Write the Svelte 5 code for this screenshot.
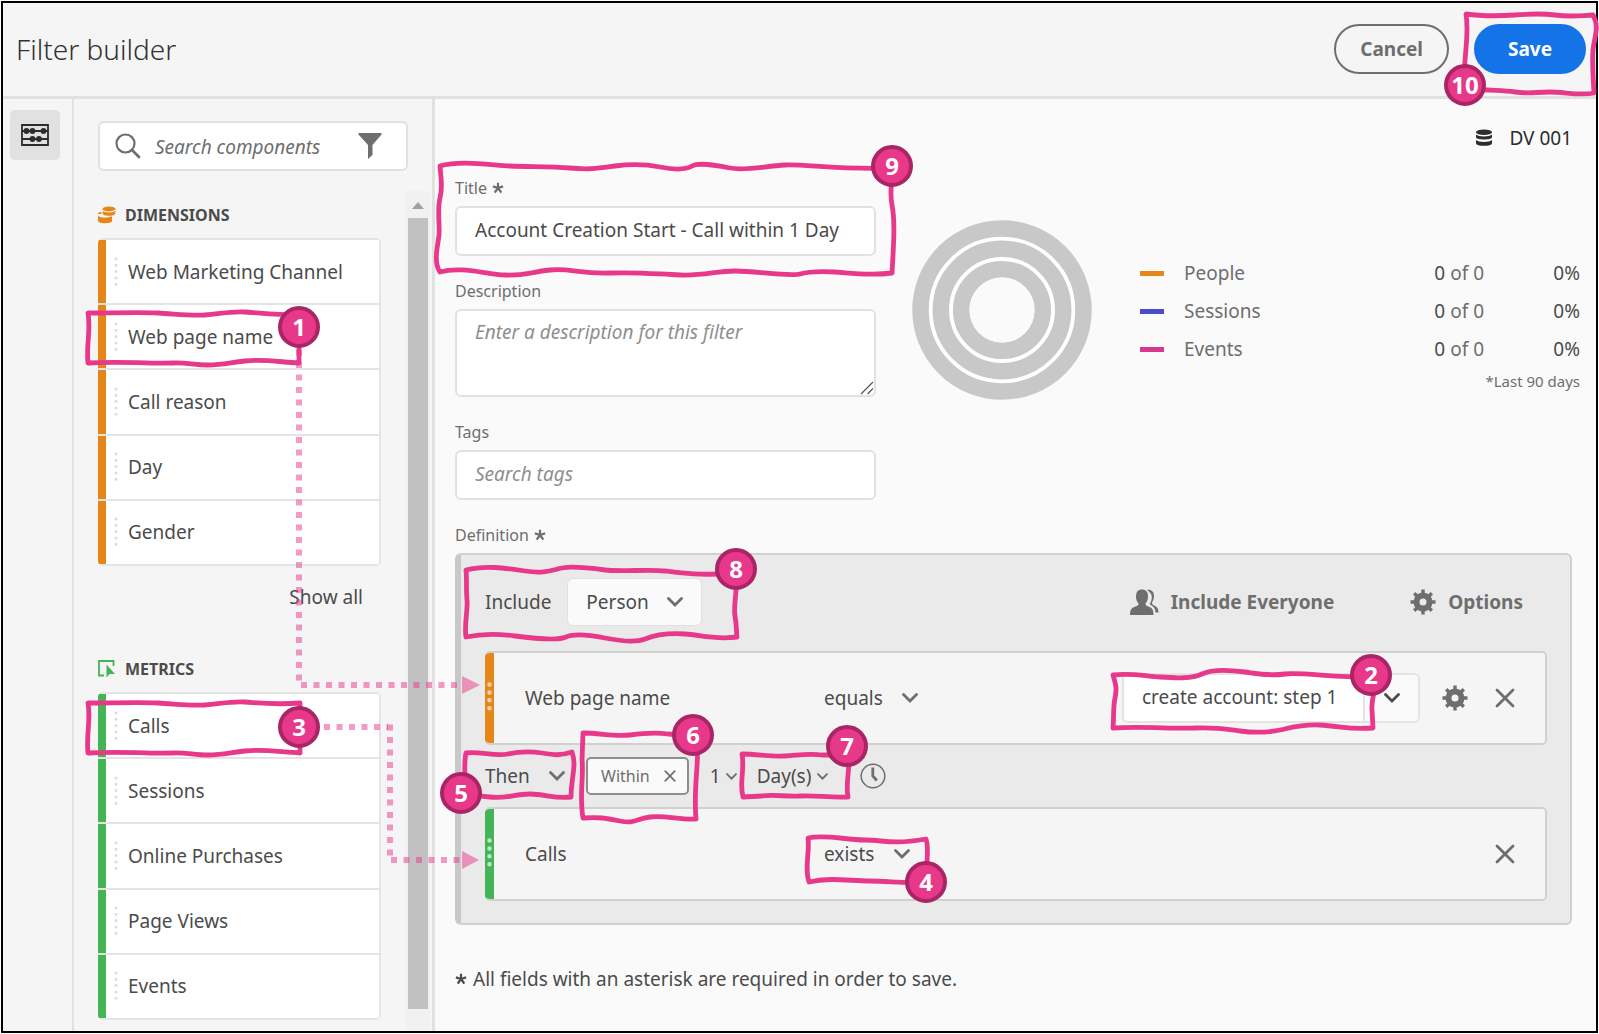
<script>
  const groups = [
    {
      name: 'Dimensions',
      kind: 'dimension',
      items: ['Web Marketing Channel', 'Web page name', 'Call reason', 'Day', 'Gender'],
      more: true
    },
    {
      name: 'Metrics',
      kind: 'metric',
      items: ['Calls', 'Sessions', 'Online Purchases', 'Page Views', 'Events'],
      more: false
    }
  ];

  const stats = [
    { name: 'People', kind: 'people' },
    { name: 'Sessions', kind: 'sessions' },
    { name: 'Events', kind: 'events' }
  ];

  const badges = [
    { n: 1, x: 299, y: 327 },
    { n: 2, x: 1371, y: 675 },
    { n: 3, x: 299, y: 727 },
    { n: 4, x: 926, y: 882 },
    { n: 5, x: 461, y: 793 },
    { n: 6, x: 693, y: 735 },
    { n: 7, x: 847, y: 746 },
    { n: 8, x: 736, y: 569 },
    { n: 9, x: 892, y: 166 },
    { n: 10, x: 1465, y: 85 }
  ];

  const outlines = [
    'M88 313 C110 313 140 312 158 313 S190 316 205 315 S230 311 245 312 S275 315 299 315 V345 L299 363 C280 362 262 359 245 361 S222 365 208 365 S185 362 172 363 S120 361 88 363 C86 345 91 330 88 313Z',
    'M88 703 C110 703 140 702 158 703 S190 706 205 705 S230 701 245 702 S275 705 300 703 V735 L300 753 C280 752 262 749 245 751 S222 755 208 755 S185 752 172 753 S120 751 88 753 C86 735 91 720 88 703Z',
    'M440 166 C460 160 490 165 510 166 S550 166 570 168 S600 168 615 166 S645 164 660 167 S685 170 692 166 S715 165 730 168 S765 166 785 165 S840 170 892 168 C893 180 889 190 892 205 S894 240 892 273 C870 276 850 273 835 272 S810 271 800 274 S755 271 735 271 S705 276 680 275 S640 272 610 273 S570 268 550 270 S525 276 505 275 S460 266 440 272 C433 262 438 245 439 235 S437 210 440 198 S441 180 440 166Z',
    'M466 570 C485 565 505 568 525 571 S552 570 562 568 S590 568 605 570 S650 569 665 571 S700 576 736 573 C738 590 733 605 735 616 S736 630 737 637 C715 640 700 635 685 634 S655 635 645 639 S615 640 605 638 S575 633 566 637 S530 638 515 636 S480 634 466 637 C464 625 468 610 467 600 S467 580 466 570Z',
    'M1113 675 C1130 673 1145 676 1160 677 S1192 679 1202 674 S1230 670 1245 672 S1270 676 1285 674 S1340 678 1375 677 C1376 690 1371 700 1372 710 L1373 728 C1350 730 1340 726 1320 725 S1290 728 1280 730 S1255 733 1240 731 S1215 727 1195 728 S1140 726 1113 728 C1114 715 1113 708 1115 698 S1116 685 1113 675Z',
    'M1466 14 C1480 16 1500 16 1515 15 S1540 13 1555 15 S1575 16 1593 15 C1600 27 1594 38 1593 50 S1593 75 1594 93 C1580 96 1565 92 1550 92 S1530 94 1515 92 S1490 91 1465 88 C1462 60 1470 40 1466 14Z',
    'M466 753 C480 751 495 757 508 754 S530 751 542 753 S560 756 572 752 C577 765 571 778 571 797 C555 799 545 794 530 794 S505 799 490 797 S470 796 463 795 C467 780 463 765 466 753Z',
    'M583 733 C600 733 615 737 630 735 S655 732 668 734 L697 736 C700 760 693 785 696 819 C680 820 665 815 650 817 S635 824 620 821 S600 817 583 818 C579 795 584 775 582 760 Z',
    'M742 754 C758 754 770 757 785 756 S810 753 822 755 L848 755 C851 770 845 780 848 797 C830 798 815 795 800 796 S775 794 762 796 L743 797 C739 783 745 770 742 754Z',
    'M808 838 C825 834 845 840 865 840 S890 845 926 839 C930 850 925 865 927 882 C905 884 890 881 870 881 S830 877 809 882 C804 868 810 852 808 838Z'
  ];
</script>

{#snippet chevron(small)}
  <svg class="chevron" class:small viewBox="0 0 16 10" aria-hidden="true">
    <path d="M1.5 1.5 8 8 14.5 1.5" fill="none" stroke="currentColor" stroke-width="2.8" stroke-linecap="round" />
  </svg>
{/snippet}

{#snippet gear()}
  <svg class="i26" viewBox="0 0 26 26" aria-hidden="true">
    <circle cx="13" cy="13" r="6.5" fill="none" stroke="currentColor" stroke-width="6" />
    <g stroke="currentColor" stroke-width="3.4">
      <path d="M13 .5V5M13 21v4.500M.5 13H5M21 13h4.500M4.200 4.200l3 3M18.800 18.800l3 3M4.200 21.800l3-3M18.800 7.200l3-3" />
    </g>
  </svg>
{/snippet}

{#snippet cross(small)}
  <svg class="cross" class:small viewBox="0 0 20 20" aria-hidden="true">
    <path d="M2 2 18 18M18 2 2 18" stroke="currentColor" stroke-width="2.8" stroke-linecap="round" />
  </svg>
{/snippet}

{#snippet asterisk()}
  <svg class="asterisk" viewBox="0 0 12 12" aria-hidden="true">
    <path d="M6 6V.8M6 6 .9 4.400M6 6l5.100-1.600M6 6l-3.300 4.700M6 6l3.300 4.700" stroke="currentColor" stroke-width="2.2" />
  </svg>
{/snippet}

{#snippet dropdown(label, value, small)}
  <span class="dropdown" class:compact={small}>
    <select aria-label={label}><option>{value}</option></select>
    {@render chevron(small)}
  </span>
{/snippet}

<div class="page">
  <header>
    <h1>Filter builder</h1>
    <button class="pill">Cancel</button>
    <button class="pill primary">Save</button>
  </header>

  <div class="body">
    <nav>
      <button class="rail-button" aria-label="Components">
        <svg viewBox="0 0 28 22" aria-hidden="true">
          <path d="M1 1h26v20H1zM1 7h26M1 15h26" fill="none" stroke="#2c2c2c" stroke-width="1.8" />
          <g fill="#2c2c2c"><circle cx="5.500" cy="7" r="2.900" /><circle cx="11.500" cy="7" r="2.900" /><circle cx="22.500" cy="7" r="2.900" /><circle cx="11.500" cy="15" r="2.900" /><circle cx="18" cy="15" r="2.900" /></g>
        </svg>
      </button>
    </nav>

    <aside>
      <div class="search">
        <svg class="i26" viewBox="0 0 26 26" aria-hidden="true">
          <circle cx="10.500" cy="10.500" r="9" fill="none" stroke="#6e6e6e" stroke-width="2.200" />
          <path d="m17 17 7 7" stroke="#6e6e6e" stroke-width="2.800" stroke-linecap="round" />
        </svg>
        <input type="search" placeholder="Search components" aria-label="Search components" />
        <button class="plain" aria-label="Filter components">
          <svg class="i26" viewBox="0 0 26 26" aria-hidden="true"><path d="M1.500 0h23v1.500L15.500 12v10l-4.500 4V12L1.500 1.500z" fill="#6e6e6e" /></svg>
        </button>
      </div>
      <div class="scroll-area">
        <div class="groups">
          {#each groups as group}
            <section class={group.kind}>
              <h2>
                {#if group.kind === 'dimension'}
                  <svg viewBox="0 0 18 18" aria-hidden="true">
                    <path d="M0 9c0 3.500 14 3.500 14 0v6c0 3-14 3-14 0z" fill="#e68619" />
                    <path d="M4.500 3v4.500c0 3.500 13 3.500 13 0V3z" fill="#e68619" stroke="#f5f5f5" stroke-width=".6" />
                    <ellipse cx="11" cy="3.200" rx="6.500" ry="2.600" fill="#e68619" />
                    <path d="M5 4.200c2 2.300 10 2.300 12 0M.5 8.500c1 .6 2 1 3.500 1.200" fill="none" stroke="#f5f5f5" stroke-width="1.100" />
                    <path d="M0 8c0-1.500 1.500-2 3.500-2v2z" fill="#e68619" />
                  </svg>
                {:else}
                  <svg viewBox="0 0 18 18" aria-hidden="true">
                    <path d="M6 15.500H1V1h14.500v5" fill="none" stroke="#44b556" stroke-width="1.800" />
                    <path d="M8.500 4.500v13l3-3.500h5.500z" fill="#44b556" />
                  </svg>
                {/if}
                {group.name}
              </h2>
              <ul>
                {#each group.items as item}
                  <li>
                    <svg class="grip" viewBox="0 0 4 30" aria-hidden="true"><path d="M2 2v26" /></svg>
                    {item}
                  </li>
                {/each}
              </ul>
              {#if group.more}<button class="plain more">Show all</button>{/if}
            </section>
          {/each}
        </div>
        <div class="scrollbar">
          <svg viewBox="0 0 12 7" aria-hidden="true"><path d="M0 7 6 0l6 7z" fill="#a0a0a0" /></svg>
          <div class="thumb"></div>
        </div>
      </div>
    </aside>

    <main>
      <div class="data-view">
        <svg viewBox="0 0 18 18" aria-hidden="true">
          <g fill="#2c2c2c"><ellipse cx="9" cy="3.200" rx="8" ry="2.800" /><path d="M1 5.500c2 2.500 14 2.500 16 0v2.800c0 3-16 3-16 0zM1 11c2 2.500 14 2.500 16 0v3.200c0 3.500-16 3.500-16 0z" /></g>
        </svg>
        DV 001
      </div>

      <div class="overview">
        <div class="form">
          <label for="title">Title {@render asterisk()}</label>
          <input id="title" type="text" value="Account Creation Start - Call within 1 Day" />
          <label for="description">Description</label>
          <div class="area">
            <textarea id="description" placeholder="Enter a description for this filter"></textarea>
            <svg viewBox="0 0 14 14" aria-hidden="true"><path d="M1 13 13 1M7.500 13 13 7.500" stroke="#555" stroke-width="1.200" /></svg>
          </div>
          <label for="tags">Tags</label>
          <input id="tags" type="text" placeholder="Search tags" />
        </div>

        <svg class="rings" viewBox="0 0 180 180" aria-hidden="true">
          <circle cx="90" cy="90" r="75" fill="#fff" />
          <g fill="none" stroke="#c8c8c8">
            <circle cx="90" cy="90" r="81.500" stroke-width="16.500" />
            <circle cx="90" cy="90" r="61.200" stroke-width="16.500" />
            <circle cx="90" cy="90" r="40.800" stroke-width="16.500" />
          </g>
          <circle cx="90" cy="90" r="32.500" fill="#fafafa" />
        </svg>

        <div class="stats">
          <table>
            <tbody>
              {#each stats as s}
                <tr>
                  <td class="key"><span class={s.kind}></span></td>
                  <th scope="row">{s.name}</th>
                  <td><b>0</b> of 0</td>
                  <td class="share">0%</td>
                </tr>
              {/each}
            </tbody>
          </table>
          <p>*Last 90 days</p>
        </div>
      </div>

      <h3>Definition {@render asterisk()}</h3>
      <section class="definition">
        <div class="scope">
          <span>Include</span>
          <span class="boxed">{@render dropdown('Include scope', 'Person', false)}</span>
          <button class="plain strong everyone">
            <svg viewBox="0 0 30 26" aria-hidden="true">
              <path d="M18 1c4-1 7 1.500 7 6 0 3-1 5-2 6.500 0 2 1 2.500 3 3.500 2.500 1.200 3.500 3 3.500 6.500h-3c0-4-2-6-5-7.500-.7-.5-.7-1.500 0-2.500 2-3.500 2.500-9-3.500-12.500z" fill="#6e6e6e" />
              <path d="M13 .5c4 0 6 2.500 6 7 0 3-1 5.500-2.500 7 0 2 .8 2.300 3.300 3.200 3.600 1.300 4.700 3 4.700 8.300H1c0-5.300 1.400-7 5-8.300 2.500-.9 3.500-1.200 3.500-3.200C8 13 7 10.500 7 7.500c0-4.500 2-7 6-7z" fill="#6e6e6e" />
            </svg>
            Include Everyone
          </button>
          <button class="plain strong">{@render gear()} Options</button>
        </div>

        <article class="rule dimension">
          <svg class="handle" viewBox="0 0 8 30" aria-hidden="true"><path d="M4 3v25" /></svg>
          <span class="name">Web page name</span>
          {@render dropdown('Operator', 'equals', false)}
          <span class="value">
            <input type="text" value="create account: step 1" aria-label="Value" />
            <button aria-label="Show values">{@render chevron(false)}</button>
          </span>
          <button class="plain" aria-label="Rule options">{@render gear()}</button>
          <button class="plain remove" aria-label="Remove rule">{@render cross(false)}</button>
        </article>

        <div class="sequence">
          {@render dropdown('Sequence', 'Then', false)}
          <span class="tag">Within <button class="plain" aria-label="Remove Within">{@render cross(true)}</button></span>
          {@render dropdown('Count', '1', true)}
          <span class="unit">{@render dropdown('Unit', 'Day(s)', true)}</span>
          <button class="plain clock" aria-label="Time restriction">
            <svg class="i26" viewBox="0 0 26 26" aria-hidden="true">
              <circle cx="13" cy="13" r="11.800" fill="none" stroke="#6e6e6e" stroke-width="1.500" />
              <path d="M12.800 4.500V13l4 4.500" fill="none" stroke="#6e6e6e" stroke-width="2.800" />
            </svg>
          </button>
        </div>

        <article class="rule metric">
          <svg class="handle" viewBox="0 0 8 30" aria-hidden="true"><path d="M4 3v25" /></svg>
          <span class="name">Calls</span>
          {@render dropdown('Operator', 'exists', false)}
          <button class="plain remove last" aria-label="Remove rule">{@render cross(false)}</button>
        </article>
      </section>

      <p class="note">{@render asterisk()} All fields with an asterisk are required in order to save.</p>
    </main>
  </div>

  <svg class="callouts" viewBox="0 0 1599 1034" role="img" aria-label="Numbered steps">
    <g fill="none" stroke="#e8388a" stroke-opacity=".5" stroke-width="6" stroke-dasharray="6 6.500">
      <path d="M299 349.500V681" />
      <path d="M301 685H461" />
      <path d="M324 727H388" />
      <path d="M390 724.500V856" />
      <path d="M391 860H461" />
    </g>
    <path d="M462 676v18l18-9zM462 851v18l17-9z" fill="#e8388a" fill-opacity=".5" />
    <g fill="none" stroke="#e8388a" stroke-width="4.800" stroke-linejoin="round">
      {#each outlines as d}<path {d} />{/each}
    </g>
    {#each badges as b}
      <circle cx={b.x} cy={b.y} r="19" fill="#e8388a" stroke="#a92566" stroke-width="4" />
      <text x={b.x} y={b.y + 9}>{b.n}</text>
    {/each}
  </svg>
</div>

<style>
  :global(body) {
    margin: 0;
    background: #fff;
  }
  .page,
  .page * {
    box-sizing: border-box;
  }
  .page {
    position: relative;
    display: flex;
    flex-direction: column;
    min-height: 100vh;
    border: 1px solid #fff;
    outline: 2px solid #000;
    outline-offset: -3px;
    padding: 2px;
    background: #f5f5f5;
    color: #4b4b4b;
    font: 19px/26px 'Noto Sans', sans-serif;
  }
  button,
  input,
  select,
  textarea {
    font: inherit;
    color: inherit;
    margin: 0;
  }
  svg {
    display: block;
    flex: none;
  }
  .i26 {
    width: 26px;
    height: 26px;
  }
  .plain {
    display: flex;
    align-items: center;
    padding: 0;
    border: 0;
    background: none;
    color: #6e6e6e;
  }

  header {
    display: flex;
    align-items: center;
    height: 96px;
    padding: 0 10px 2px 13px;
    border-bottom: 3px solid #e1e1e1;
  }
  h1 {
    flex: 1;
    margin: 0;
    font-size: 28px;
    line-height: 40px;
    font-weight: 300;
    color: #323232;
  }
  .pill {
    height: 50px;
    padding: 0 24px;
    border: 2px solid #6e6e6e;
    border-radius: 25px;
    background: none;
    color: #6e6e6e;
    font-weight: 700;
  }
  .primary {
    margin-left: 25px;
    padding: 0 32px;
    border-color: #1473e6;
    background: #1473e6;
    color: #fff;
  }

  .body {
    flex: 1;
    display: flex;
  }
  nav {
    width: 71px;
    padding: 11px 7px;
    border-right: 2px solid #e1e1e1;
  }
  .rail-button {
    display: grid;
    place-items: center;
    width: 50px;
    height: 50px;
    padding: 0;
    border: 0;
    border-radius: 5px;
    background: #e1e1e1;
  }
  .rail-button svg {
    width: 28px;
    height: 22px;
  }

  aside {
    display: flex;
    flex-direction: column;
    width: 361px;
    padding: 22px 2px 0 24px;
    border-right: 3px solid #e1e1e1;
  }
  .search {
    display: flex;
    align-items: center;
    width: 310px;
    height: 50px;
    padding: 0 23px 0 15px;
    border: 2px solid #e1e1e1;
    border-radius: 6px;
    background: #fff;
  }
  .search input {
    flex: 1;
    min-width: 0;
    padding: 2px 0 0 14px;
    border: 0;
    background: none;
  }
  ::placeholder {
    color: #8e8e8e;
    font-style: italic;
    opacity: 1;
  }
  .search ::placeholder {
    color: #6e6e6e;
  }
  .scroll-area {
    flex: 1;
    display: flex;
    justify-content: space-between;
    margin-top: 20px;
  }
  .groups {
    display: flex;
    flex-direction: column;
    gap: 17px;
    width: 283px;
  }
  h2 {
    display: flex;
    align-items: center;
    gap: 9px;
    height: 47px;
    margin: 0;
    font-size: 16px;
    font-weight: 700;
    text-transform: uppercase;
  }
  h2 svg {
    width: 18px;
    height: 18px;
  }
  ul {
    display: flex;
    flex-direction: column;
    height: 328px;
    margin: 0;
    padding: 0;
    list-style: none;
    border-right: 2px solid #e4e4e4;
    border-radius: 5px;
    overflow: hidden;
    background: #fff;
  }
  li {
    flex: 1;
    display: flex;
    align-items: center;
    gap: 10px;
    padding-left: 16px;
    border-top: 2px solid #e4e4e4;
    box-shadow: inset 8px 0 #e68619;
  }
  .metric li {
    box-shadow: inset 8px 0 #44b556;
  }
  li:last-child {
    border-bottom: 2px solid #e4e4e4;
  }
  .grip {
    width: 4px;
    height: 30px;
  }
  .grip path {
    stroke: #dcdcdc;
    stroke-width: 3;
    stroke-linecap: round;
    stroke-dasharray: 0 6.300;
  }
  .more {
    height: 62px;
    margin-left: auto;
    padding-right: 18px;
    color: #4b4b4b;
  }
  .scrollbar {
    display: flex;
    flex-direction: column;
    align-items: center;
    gap: 9px;
    width: 25px;
    padding: 11px 0 22px;
    background: #f1f1f1;
  }
  .scrollbar svg {
    width: 12px;
    height: 7px;
  }
  .thumb {
    flex: 1;
    width: 20px;
    background: #c1c1c1;
  }

  main {
    flex: 1;
    min-width: 0;
    padding: 24px 16px 0 20px;
    background: #fafafa;
  }
  .data-view {
    display: flex;
    align-items: center;
    justify-content: flex-end;
    gap: 16px;
    height: 30px;
    margin: 0 8px 23px 0;
    color: #2c2c2c;
  }
  .data-view svg {
    width: 18px;
    height: 18px;
  }
  .overview {
    display: flex;
    align-items: flex-start;
  }
  .form {
    display: flex;
    flex-direction: column;
    width: 421px;
  }
  label,
  h3 {
    display: flex;
    align-items: center;
    gap: 5px;
    height: 24px;
    margin: 0 0 6px;
    font-size: 16px;
    font-weight: 400;
    line-height: 24px;
    color: #6e6e6e;
  }
  .asterisk {
    width: 12px;
    height: 12px;
  }
  .form input,
  textarea {
    width: 100%;
    height: 50px;
    padding: 0 18px 2px;
    border: 2px solid #e1e1e1;
    border-radius: 6px;
    background: #fff;
  }
  .form input {
    margin-bottom: 23px;
  }
  .area {
    display: grid;
    margin-bottom: 23px;
  }
  .area > * {
    grid-area: 1 / 1;
  }
  .area textarea {
    height: 88px;
    padding-top: 8px;
    resize: none;
  }
  .area svg {
    place-self: end;
    width: 14px;
    height: 14px;
    margin: 2px;
  }
  .rings {
    width: 180px;
    height: 180px;
    margin: 44px 48px 0 36px;
  }
  .stats {
    flex: 1;
    margin-top: 78px;
    color: #6e6e6e;
  }
  table {
    width: 100%;
    border-collapse: collapse;
  }
  td,
  th {
    height: 38px;
    padding: 0;
    text-align: right;
    font-weight: 400;
  }
  th {
    width: 200px;
    text-align: left;
  }
  .key {
    width: 44px;
  }
  .key span {
    display: block;
    width: 24px;
    height: 5px;
    background: #e68619;
  }
  .key .sessions {
    background: #4b4ccd;
  }
  .key .events {
    background: #d83790;
  }
  td b,
  .share {
    font-weight: 400;
    color: #4b4b4b;
  }
  .share {
    width: 96px;
  }
  .stats p {
    margin: 0;
    font-size: 15px;
    text-align: right;
  }

  .definition {
    margin-right: 8px;
    padding: 23px 23px 22px 24px;
    border: 2px solid #d0d0d0;
    border-left: 6px solid #c8c8c8;
    border-radius: 6px;
    background: #eaeaea;
  }
  .scope,
  .sequence {
    display: flex;
    align-items: center;
  }
  .scope {
    height: 48px;
    margin-bottom: 25px;
    padding-right: 24px;
  }
  .boxed {
    display: flex;
    align-items: center;
    height: 48px;
    margin-left: 16px;
    padding: 0 18px;
    border: 1px solid #e1e1e1;
    border-radius: 6px;
    background: #fafafa;
  }
  .boxed select {
    padding-right: 34px;
  }
  .strong {
    gap: 12px;
    font-weight: 700;
  }
  .everyone {
    margin: 0 76px 0 auto;
  }
  .everyone svg {
    width: 30px;
    height: 26px;
  }
  .dropdown {
    display: inline-grid;
    align-items: center;
  }
  .dropdown > * {
    grid-area: 1 / 1;
  }
  .dropdown .chevron {
    justify-self: end;
    pointer-events: none;
  }
  select {
    appearance: none;
    padding: 0 35px 0 0;
    border: 0;
    background: none;
  }
  .compact select {
    padding-right: 16px;
  }
  .chevron {
    width: 16px;
    height: 10px;
    color: #6e6e6e;
  }
  .chevron.small {
    width: 11px;
    height: 7px;
  }
  .cross {
    width: 20px;
    height: 20px;
  }
  .cross.small {
    width: 12px;
    height: 12px;
  }
  .rule {
    display: flex;
    align-items: center;
    height: 94px;
    padding-right: 30px;
    border: 2px solid #d0d0d0;
    border-left: 0;
    border-radius: 5px;
    overflow: hidden;
    background: #f5f5f5;
  }
  .handle {
    align-self: stretch;
    width: 9px;
    height: auto;
    background: #e68619;
  }
  .metric .handle {
    background: #44b556;
  }
  .handle path {
    stroke: #fff;
    stroke-opacity: 0.65;
    stroke-width: 4;
    stroke-linecap: round;
    stroke-dasharray: 0 7;
  }
  .name {
    width: 330px;
    padding-left: 31px;
  }
  .value {
    display: flex;
    width: 298px;
    height: 50px;
    margin: 0 22px 0 auto;
    border: 2px solid #e4e4e4;
    border-radius: 6px;
    overflow: hidden;
  }
  .value input {
    flex: 1;
    min-width: 0;
    padding: 0 18px 2px;
    border: 0;
    background: #fff;
  }
  .value button {
    display: grid;
    place-items: center;
    width: 55px;
    padding: 0;
    border: 0;
    border-left: 2px solid #e4e4e4;
    background: #fafafa;
  }
  .value .chevron {
    color: #4b4b4b;
  }
  .remove {
    margin-left: 27px;
  }
  .last {
    margin-left: auto;
  }
  .sequence {
    height: 62px;
  }
  .tag {
    display: flex;
    align-items: center;
    gap: 14px;
    height: 38px;
    margin: 0 21px 0 21px;
    padding: 0 11px 0 13px;
    border: 2px solid #8e8e8e;
    border-radius: 5px;
    background: #fafafa;
    font-size: 16px;
    color: #6e6e6e;
  }
  .unit {
    margin-left: 20px;
  }
  .clock {
    margin-left: 32px;
  }
  .note {
    display: flex;
    align-items: center;
    gap: 6px;
    margin: 41px 0 0;
  }

  .callouts {
    position: absolute;
    top: -1px;
    left: -1px;
    width: 1599px;
    height: 1034px;
    pointer-events: none;
  }
  .callouts text {
    font: 700 24px 'Open Sans', sans-serif;
    fill: #fff;
    text-anchor: middle;
  }
</style>
